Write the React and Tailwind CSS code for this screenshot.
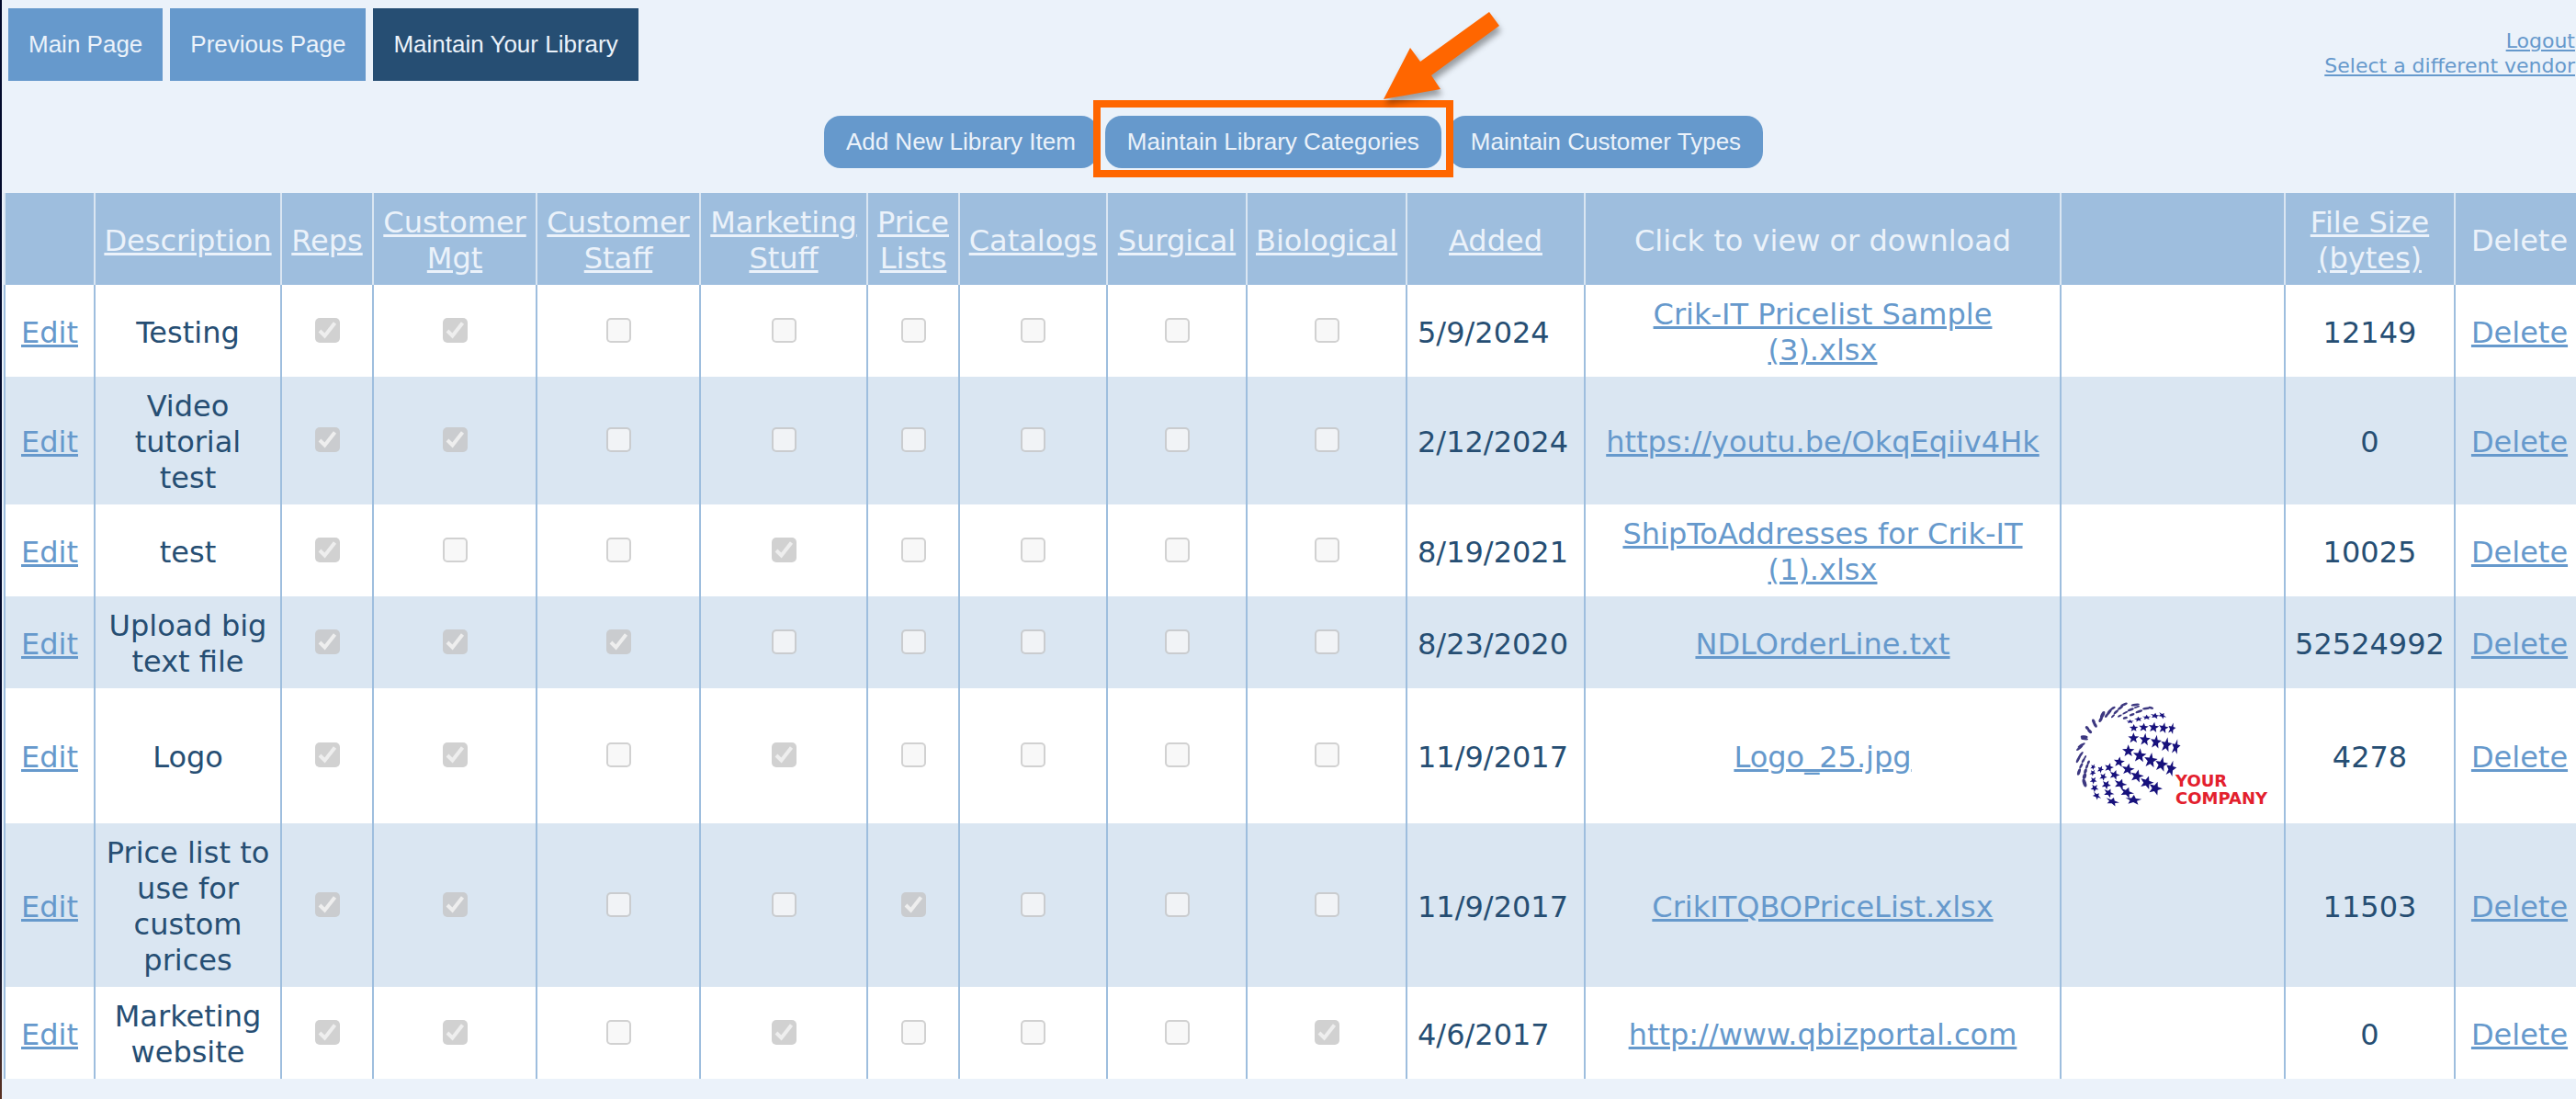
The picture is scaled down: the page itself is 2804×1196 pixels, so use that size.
import React from 'react';

const columns = [
    { label: "", width: "w-[98px]" },
    { label: "Description", width: "w-[203px]", sortable: true },
    { label: "Reps", width: "w-[100px]", sortable: true },
    { label: "Customer Mgt", width: "w-[178px]", sortable: true },
    { label: "Customer Staff", width: "w-[178px]", sortable: true },
    { label: "Marketing Stuff", width: "w-[182px]", sortable: true },
    { label: "Price Lists", width: "w-[100px]", sortable: true },
    { label: "Catalogs", width: "w-[161px]", sortable: true },
    { label: "Surgical", width: "w-[152px]", sortable: true },
    { label: "Biological", width: "w-[174px]", sortable: true },
    { label: "Added", width: "w-[194px]", sortable: true },
    { label: "Click to view or download", width: "" },
    { label: "", width: "w-[244px]" },
    { label: "File Size (bytes)", width: "w-[185px]", sortable: true },
    { label: "Delete", width: "w-[141px]" },
];

const groups = ["Reps", "Customer Mgt", "Customer Staff", "Marketing Stuff", "Price Lists", "Catalogs", "Surgical", "Biological"];

const items = [
    { id: 1, name: "Testing", groups: ["Reps", "Customer Mgt"], added: "5/9/2024", file: "Crik-IT Pricelist Sample (3).xlsx", size: 12149 },
    { id: 2, name: "Video tutorial test", groups: ["Reps", "Customer Mgt"], added: "2/12/2024", file: "https://youtu.be/OkqEqiiv4Hk", size: 0 },
    { id: 3, name: "test", groups: ["Reps", "Marketing Stuff"], added: "8/19/2021", file: "ShipToAddresses for Crik-IT (1).xlsx", size: 10025 },
    { id: 4, name: "Upload big text file", groups: ["Reps", "Customer Mgt", "Customer Staff"], added: "8/23/2020", file: "NDLOrderLine.txt", size: 52524992 },
    { id: 5, name: "Logo", groups: ["Reps", "Customer Mgt", "Marketing Stuff"], added: "11/9/2017", file: "Logo_25.jpg", size: 4278, preview: true },
    { id: 6, name: "Price list to use for custom prices", groups: ["Reps", "Customer Mgt", "Price Lists"], added: "11/9/2017", file: "CrikITQBOPriceList.xlsx", size: 11503 },
    { id: 7, name: "Marketing website", groups: ["Reps", "Customer Mgt", "Marketing Stuff", "Biological"], added: "4/6/2017", file: "http://www.qbizportal.com", size: 0 },
];

// x, y, horizontal radius, vertical radius, rotation
const stars = [
    [308, 151, 15, 13, 0], [340, 149, 17, 15, 5], [373, 149, 18, 18, 8], [405, 151, 17, 19, 12], [432, 153, 13, 20, 15],
    [307, 184, 19, 18, 0], [344, 189, 19, 22, 5], [380, 197, 19, 24, 8], [414, 206, 19, 26, 10], [445, 213, 15, 27, 12],
    [290, 226, 21, 21, 0], [327, 241, 23, 24, 5], [363, 257, 23, 26, 8], [398, 270, 22, 26, 12], [429, 284, 18, 28, 15],
    [260, 262, 19, 18, 8], [289, 286, 22, 20, 10], [318, 308, 23, 22, 14], [350, 329, 24, 23, 18], [378, 348, 24, 23, 20],
    [227, 280, 16, 16, 15], [245, 304, 18, 17, 18], [264, 334, 23, 18, 20], [285, 361, 25, 18, 22], [307, 386, 28, 17, 5],
    [199, 286, 11, 13, 25], [208, 310, 13, 14, 28], [218, 336, 16, 16, 30], [226, 363, 19, 15, 25], [238, 391, 24, 14, 20],
    [175, 278, 9, 11, 30], [174, 297, 10, 12, 35], [176, 322, 12, 13, 35], [180, 347, 14, 14, 38], [187, 372, 17, 11, 42],
    [296, 130, 13, 7, 0], [323, 122, 14, 9, -8], [350, 116, 15, 9, 0], [377, 111, 16, 10, 10], [401, 110, 15, 10, 35],
];

// x, y, half length, half thickness, rotation
const streaks = [
    [280, 118, 8, 4, -15], [302, 107, 9, 4, -20], [325, 97, 12, 4, -20], [348, 87, 12, 4, -8], [364, 85, 9, 4, 15],
    [262, 111, 8, 3, -28], [280, 101, 10, 3, -26], [298, 91, 11, 4, -22], [313, 75, 14, 4, -8], [318, 82, 10, 3, -20],
    [240, 112, 8, 3, -42], [250, 98, 10, 4, -42], [264, 85, 11, 4, -36], [276, 74, 12, 4, -22],
    [219, 110, 8, 4, -52], [228, 98, 12, 5, -55], [240, 86, 9, 4, -30],
    [200, 123, 10, 5, -62], [206, 108, 13, 6, -65],
    [177, 130, 9, 5, 68], [182, 141, 9, 5, 60],
    [156, 151, 8, 5, 45], [164, 161, 9, 5, 42],
    [146, 180, 12, 5, 5], [147, 186, 12, 4, 8],
    [137, 207, 14, 4, -32], [131, 216, 13, 4, -38],
    [127, 252, 14, 4, -62], [135, 238, 12, 4, -55],
    [129, 294, 12, 5, -72], [136, 274, 10, 4, -62], [143, 257, 9, 4, -58], [149, 246, 7, 3, -60],
    [147, 330, 14, 6, 72], [147, 308, 10, 6, -75], [150, 292, 9, 5, -72], [155, 276, 9, 4, -68], [160, 263, 7, 4, -65],
];

const starPoints = "0,-1 .25,-.34 .95,-.31 .4,.13 .59,.81 0,.42 -.59,.81 -.4,.13 -.95,-.31 -.25,-.34";

const CompanyLogo = () => (
    <svg viewBox="102 60 666 375" className="mx-auto block h-[125px] w-[222px]" role="img" aria-label="Your Company">
        <g fill="#17117c">
            {stars.map(([x, y, rx, ry, angle]) => (
                <polygon key={`${x}-${y}`} points={starPoints} transform={`translate(${x} ${y}) rotate(${angle}) scale(${rx} ${ry})`} />
            ))}
        </g>
        <g fill="#3d3880">
            {streaks.map(([x, y, rx, ry, angle]) => (
                <ellipse key={`${x}-${y}`} rx={rx} ry={ry} transform={`translate(${x} ${y}) rotate(${angle})`} />
            ))}
        </g>
        <g fill="#e3202d" fontFamily="DejaVu Sans, sans-serif" fontWeight="700" fontSize="54">
            <text x="444" y="343">YOUR</text>
            <text x="444" y="398">COMPANY</text>
        </g>
    </svg>
);

const Arrow = () => (
    <svg viewBox="0 0 140 120" className="absolute -top-[126px] -right-[72px] h-[120px] w-[140px] overflow-visible drop-shadow-[2px_6px_3px_rgba(0,0,0,0.35)]" aria-hidden="true">
        <path d="M120 13 L131 28 L57 82 L67 97 L5 108 L34 52 L45 67 Z" fill="#ff6600" />
    </svg>
);

const GroupCheckbox = ({ checked, label }) => (
    <span className="relative mx-auto mb-[6px] block size-[27px]">
        <input
            type="checkbox"
            disabled
            readOnly
            checked={checked}
            aria-label={label}
            className="block size-full appearance-none rounded-[5px] border-2 border-[#c5c5c5]/80 bg-[#f6f6f6]/80 bg-clip-padding checked:border-0 checked:bg-[#c5c5c5]/80"
        />
        {checked && (
            <svg viewBox="0 0 27 27" className="pointer-events-none absolute inset-0" fill="none" stroke="#eeeeee" strokeWidth="4" aria-hidden="true">
                <path d="M5 14 L10.5 19.5 L21.5 5.5" />
            </svg>
        )}
    </span>
);

const tabClass = "px-[22px] py-5 leading-[39px] text-[#ebf2fa]";
const pillClass = "rounded-[18px] bg-[#6699cc] px-6 py-[9px] leading-[39px] text-[#ebf2fa]";
const linkClass = "text-[#6699cc] underline decoration-[3px] underline-offset-[2px]";
const cellClass = "border-l-2 border-[#9ebede] px-[9px] pt-[13px] pb-[9px]";

const App = () => {
    return (
        <main className="flex min-h-screen overflow-x-hidden bg-[#ebf2fa] font-['DejaVu_Sans',Verdana,sans-serif] text-[#264e73]">
            <div className="w-[2px] shrink-0 bg-linear-to-b from-[#020a2c] from-85% to-[#5a3222]" />
            <div className="-mr-2 min-w-0 flex-1 pl-[2px]">
                <header className="flex items-start justify-between pt-[9px] pr-[9px] pl-[5px]">
                    <nav className="flex gap-2 font-['Liberation_Sans',Arial,sans-serif] text-[26px]">
                        <button className={`${tabClass} bg-[#6699cc]`}>Main Page</button>
                        <button className={`${tabClass} bg-[#6699cc]`}>Previous Page</button>
                        <button className={`${tabClass} bg-[#264e73]`}>Maintain Your Library</button>
                    </nav>
                    <div className="flex flex-col items-end pt-[22px] text-[22px] leading-[27px]">
                        <a href="#logout" className="text-[#6699cc] underline decoration-2 underline-offset-2">Logout</a>
                        <a href="#vendor" className="text-[#6699cc] underline decoration-2 underline-offset-2">Select a different vendor</a>
                    </div>
                </header>

                <div className="mt-[38px] mb-[27px] flex justify-center gap-2 font-['Liberation_Sans',Arial,sans-serif] text-[26px]">
                    <button className={pillClass}>Add New Library Item</button>
                    <div className="relative">
                        <button className={pillClass}>Maintain Library Categories</button>
                        <div className="pointer-events-none absolute -top-[17px] -right-[13px] -bottom-[10px] -left-[13px] border-8 border-[#ff6600]" />
                        <Arrow />
                    </div>
                    <button className={pillClass}>Maintain Customer Types</button>
                </div>

                <table className="w-full table-fixed border-separate border-spacing-0 text-center text-[32px] leading-[39px]">
                    <colgroup>
                        {columns.map((col, i) => (
                            <col key={i} className={col.width} />
                        ))}
                    </colgroup>
                    <thead>
                        <tr className="bg-[#9ebede] text-[#ebf2fa]">
                            {columns.map((col, i) => (
                                <th key={i} scope="col" className="border-l-2 border-[#dae6f2] px-[9px] pt-[13px] pb-[9px] font-normal">
                                    {col.sortable ? (
                                        <a href="#sort" className="underline decoration-[3px] underline-offset-[2px]">{col.label}</a>
                                    ) : (
                                        col.label
                                    )}
                                </th>
                            ))}
                        </tr>
                    </thead>
                    <tbody>
                        {items.map((item) => (
                            <tr key={item.id} className="bg-white even:bg-[#dae6f2]">
                                <td className={cellClass}><a href="#edit" className={linkClass}>Edit</a></td>
                                <td className={cellClass}>{item.name}</td>
                                {groups.map((group) => (
                                    <td key={group} className={cellClass}>
                                        <GroupCheckbox checked={item.groups.includes(group)} label={`${item.name}: ${group}`} />
                                    </td>
                                ))}
                                <td className={`${cellClass} pl-[11px] text-left`}>{item.added}</td>
                                <td className={`${cellClass} pr-4 pl-4`}><a href="#file" className={linkClass}>{item.file}</a></td>
                                <td className={cellClass}>{item.preview && <CompanyLogo />}</td>
                                <td className={cellClass}>{item.size}</td>
                                <td className={cellClass}><a href="#delete" className={linkClass}>Delete</a></td>
                            </tr>
                        ))}
                    </tbody>
                </table>
            </div>
        </main>
    );
};

export default App;
